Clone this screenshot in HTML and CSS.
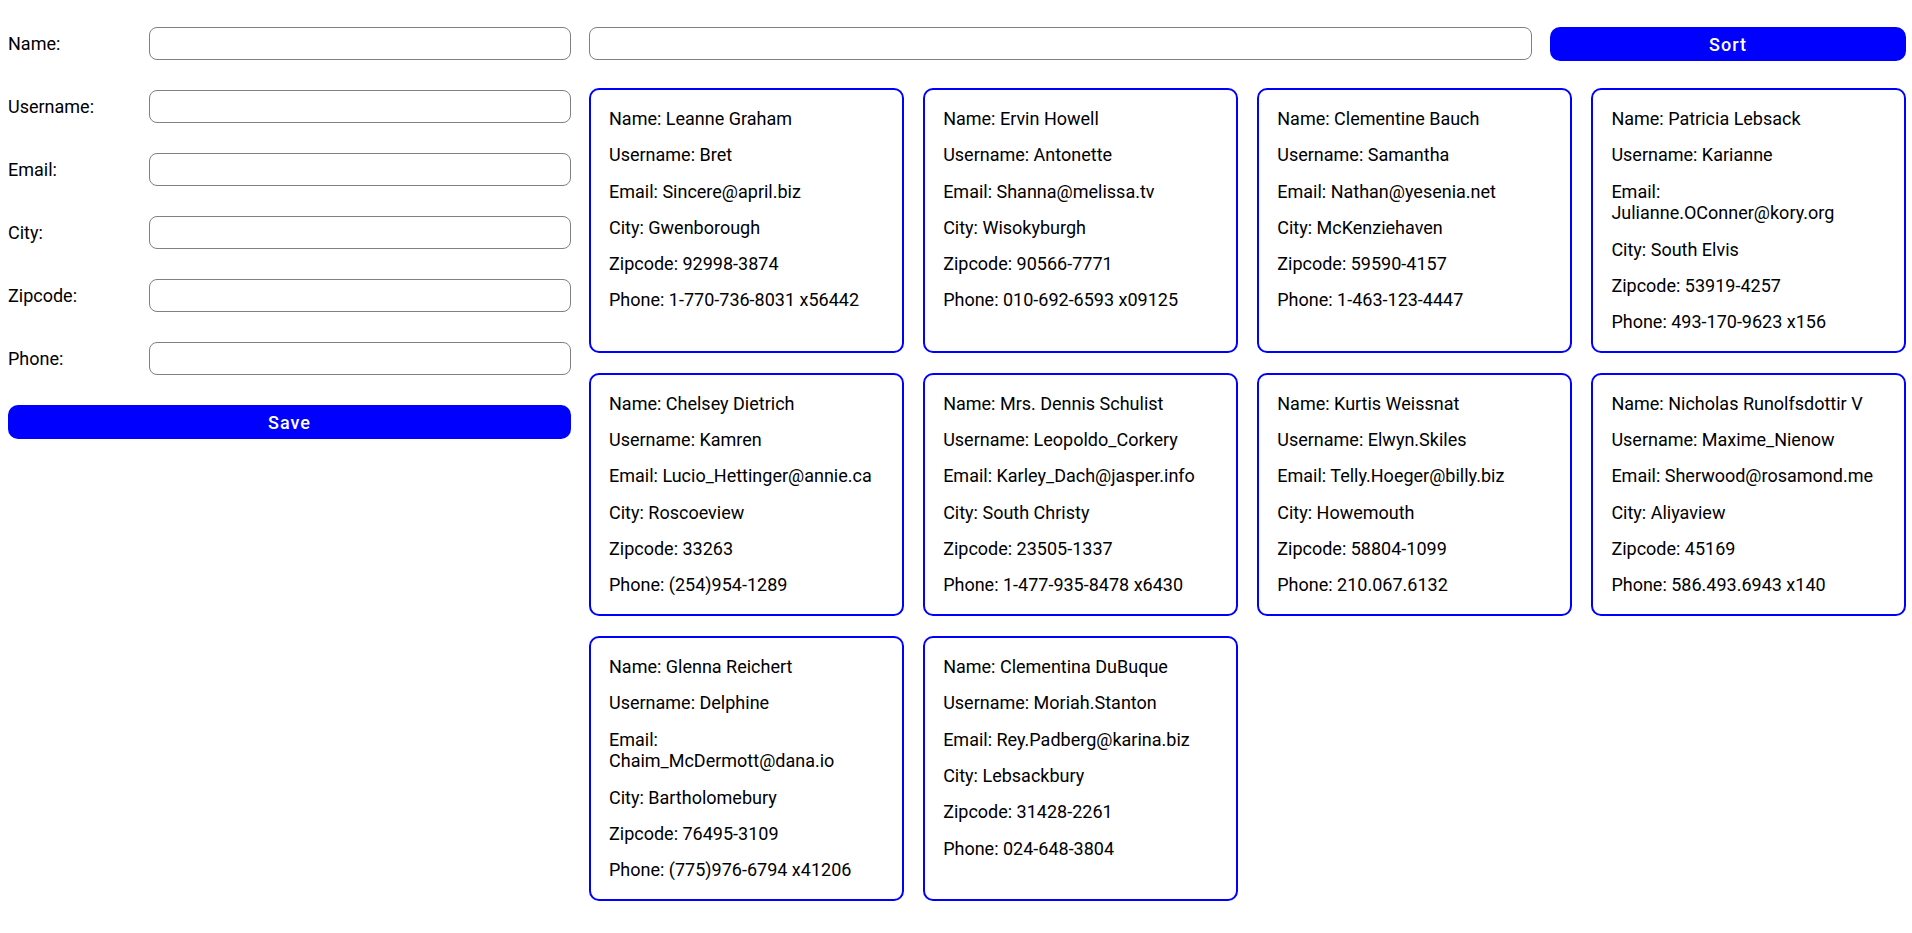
FILE: index.html
```html
<!DOCTYPE html>
<html lang="en">
<head>
<meta charset="utf-8">
<title>Users</title>
<link rel="stylesheet" href="styles.css">
</head>
<body>
<div class="app">
  <form class="user-form">
    <div class="form-row"><label class="field-label">Name:</label><input class="field" type="text"></div>
    <div class="form-row"><label class="field-label">Username:</label><input class="field" type="text"></div>
    <div class="form-row"><label class="field-label">Email:</label><input class="field" type="text"></div>
    <div class="form-row"><label class="field-label">City:</label><input class="field" type="text"></div>
    <div class="form-row"><label class="field-label">Zipcode:</label><input class="field" type="text"></div>
    <div class="form-row"><label class="field-label">Phone:</label><input class="field" type="text"></div>
    <button class="btn" type="button">Save</button>
  </form>
  <section class="users">
    <div class="toolbar">
      <input class="field" type="text">
      <button class="btn" type="button">Sort</button>
    </div>
    <div class="grid">
      <div class="card">
        <p>Name: Leanne Graham</p><p>Username: Bret</p><p>Email: Sincere@april.biz</p><p>City: Gwenborough</p><p>Zipcode: 92998-3874</p><p>Phone: 1-770-736-8031 x56442</p>
      </div>
      <div class="card">
        <p>Name: Ervin Howell</p><p>Username: Antonette</p><p>Email: Shanna@melissa.tv</p><p>City: Wisokyburgh</p><p>Zipcode: 90566-7771</p><p>Phone: 010-692-6593 x09125</p>
      </div>
      <div class="card">
        <p>Name: Clementine Bauch</p><p>Username: Samantha</p><p>Email: Nathan@yesenia.net</p><p>City: McKenziehaven</p><p>Zipcode: 59590-4157</p><p>Phone: 1-463-123-4447</p>
      </div>
      <div class="card">
        <p>Name: Patricia Lebsack</p><p>Username: Karianne</p><p>Email: Julianne.OConner@kory.org</p><p>City: South Elvis</p><p>Zipcode: 53919-4257</p><p>Phone: 493-170-9623 x156</p>
      </div>
      <div class="card">
        <p>Name: Chelsey Dietrich</p><p>Username: Kamren</p><p>Email: Lucio_Hettinger@annie.ca</p><p>City: Roscoeview</p><p>Zipcode: 33263</p><p>Phone: (254)954-1289</p>
      </div>
      <div class="card">
        <p>Name: Mrs. Dennis Schulist</p><p>Username: Leopoldo_Corkery</p><p>Email: Karley_Dach@jasper.info</p><p>City: South Christy</p><p>Zipcode: 23505-1337</p><p>Phone: 1-477-935-8478 x6430</p>
      </div>
      <div class="card">
        <p>Name: Kurtis Weissnat</p><p>Username: Elwyn.Skiles</p><p>Email: Telly.Hoeger@billy.biz</p><p>City: Howemouth</p><p>Zipcode: 58804-1099</p><p>Phone: 210.067.6132</p>
      </div>
      <div class="card">
        <p>Name: Nicholas Runolfsdottir V</p><p>Username: Maxime_Nienow</p><p>Email: Sherwood@rosamond.me</p><p>City: Aliyaview</p><p>Zipcode: 45169</p><p>Phone: 586.493.6943 x140</p>
      </div>
      <div class="card">
        <p>Name: Glenna Reichert</p><p>Username: Delphine</p><p>Email: Chaim_McDermott@dana.io</p><p>City: Bartholomebury</p><p>Zipcode: 76495-3109</p><p>Phone: (775)976-6794 x41206</p>
      </div>
      <div class="card">
        <p>Name: Clementina DuBuque</p><p>Username: Moriah.Stanton</p><p>Email: Rey.Padberg@karina.biz</p><p>City: Lebsackbury</p><p>Zipcode: 31428-2261</p><p>Phone: 024-648-3804</p>
      </div>
    </div>
  </section>
</div>
</body>
</html>
```
FILE: styles.css
```css
html, body {
  margin: 0;
  padding: 0;
  background: #fff;
}

body {
  font-family: Roboto, "Liberation Sans", sans-serif;
  color: #000;
}

.app {
  display: grid;
  grid-template-columns: 563px 1fr;
  column-gap: 18px;
  padding: 27px 6px 0 8px;
  align-items: start;
}

.user-form {
  display: flex;
  flex-direction: column;
  gap: 30px;
}

.form-row {
  display: grid;
  grid-template-columns: 141px 1fr;
  align-items: center;
}

.field-label {
  font-size: 18px;
  line-height: 22px;
}

.field {
  display: block;
  width: 100%;
  height: 33px;
  box-sizing: border-box;
  margin: 0;
  padding: 0 10px;
  border: 1px solid #808080;
  border-radius: 8px;
  background: #fff;
  font-family: Roboto, "Liberation Sans", sans-serif;
  font-size: 16px;
  outline: none;
}

.btn {
  display: block;
  width: 100%;
  height: 34px;
  margin: 0;
  padding: 0;
  border: none;
  border-radius: 10px;
  background: #0000ff;
  color: #fff;
  font-family: Roboto, "Liberation Sans", sans-serif;
  font-size: 18px;
  font-weight: 500;
  letter-spacing: 1px;
  cursor: pointer;
}

.toolbar {
  display: grid;
  grid-template-columns: 1fr 356px;
  column-gap: 18px;
  align-items: start;
  margin-bottom: 27px;
}

.grid {
  display: grid;
  grid-template-columns: repeat(4, 1fr);
  column-gap: 19.5px;
  row-gap: 20px;
}

.card {
  display: flex;
  flex-direction: column;
  gap: 14.6px;
  padding: 18px;
  border: 2px solid #0000ff;
  border-radius: 10px;
  font-size: 18px;
  line-height: 21.7px;
  min-width: 0;
}

.card p {
  margin: 0;
}
```
